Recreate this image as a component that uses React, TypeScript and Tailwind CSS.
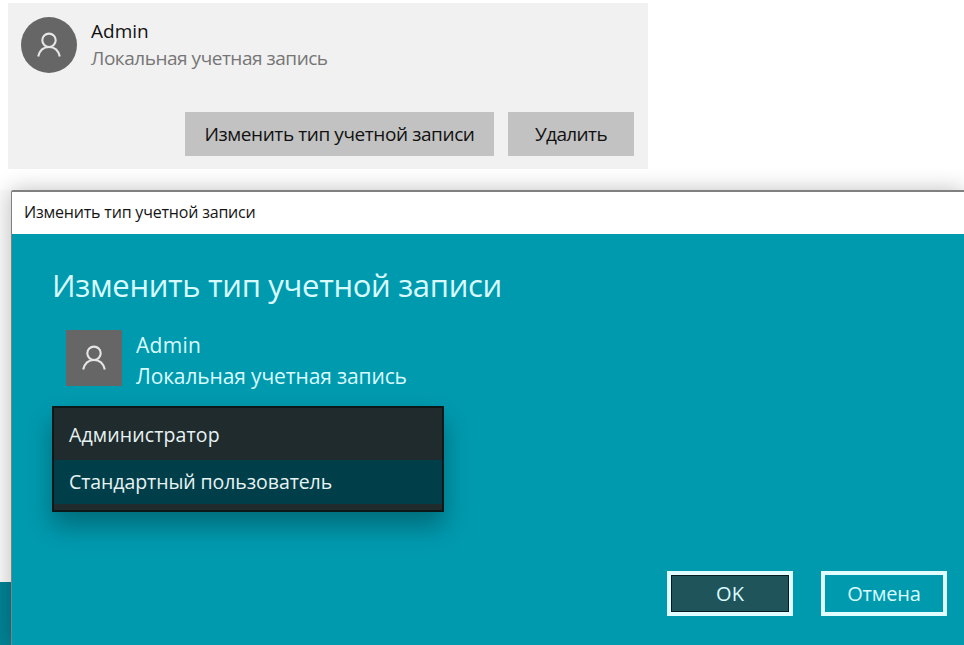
import { clsx } from 'clsx';

const roles = ['Администратор', 'Стандартный пользователь'];

function UserIcon() {
  return (
    <svg width="24" height="26" viewBox="0 0 24 26" fill="none" stroke="#e6e6e6" strokeWidth="2.1">
      <circle cx="12" cy="8.3" r="6.7" />
      <path d="M1.2 24.5C2.6 18.4 6.6 15 12 15S21.4 18.4 22.8 24.5" />
    </svg>
  );
}

function AccountCard() {
  return (
    <section className="ml-2 mt-[3px] flex h-[166px] w-[640px] shrink-0 flex-col justify-between bg-[#f1f1f1] pb-[13px] pl-[13px] pr-[14px] pt-[14px]">
      <div className="flex">
        <div className="flex h-14 w-14 items-center justify-center rounded-full bg-[#666666]">
          <UserIcon />
        </div>
        <div className="ml-[14px] pt-px">
          <div className="h-[27px] text-[19px] leading-[27px] text-[#111111]">Admin</div>
          <div className="h-[27px] whitespace-nowrap text-[19px] leading-[26px] tracking-[-0.47px] text-[#767676]">Локальная учетная запись</div>
        </div>
      </div>
      <div className="flex justify-end gap-[14px]">
        <button className="h-11 w-[309px] whitespace-nowrap bg-[#c2c2c2] pt-px text-[19px] tracking-[-0.41px] text-[#111111]">
          Изменить тип учетной записи
        </button>
        <button className="h-11 w-[126px] bg-[#c2c2c2] pt-px text-[19px] tracking-[-0.6px] text-[#111111]">Удалить</button>
      </div>
    </section>
  );
}

function RoleList() {
  return (
    <ul className="mt-[20px] h-[106px] w-[392px] border-2 border-[#0c1718] bg-[#1f2b2d] pt-[4px] shadow-[0_14px_24px_rgba(0,40,45,0.4)]">
      {roles.map((role, i) => (
        <li
          key={role}
          className={clsx(
            'flex items-center whitespace-nowrap pl-[15px] text-[#e8f2f3]',
            i === 1
              ? 'h-[44px] bg-[#003f49] pb-px text-[19.5px] tracking-[-0.08px]'
              : 'h-[48px] pb-[3px] text-[19.5px] tracking-[0.13px]',
          )}
        >
          {role}
        </li>
      ))}
    </ul>
  );
}

function ChangeTypeDialog() {
  return (
    <div className="relative flex w-[953px] shrink-0 flex-col rounded-tl-[2px] border-l border-t-2 border-[#808080] shadow-[0_0_22px_rgba(0,0,0,0.25)]">
      <div className="flex h-[42px] shrink-0 items-center bg-white pb-[2px] pl-[12px] text-[16px] tracking-[-0.19px] text-[#151515]">
        <span className="whitespace-nowrap">Изменить тип учетной записи</span>
      </div>
      <div className="flex flex-1 flex-col bg-[#009aaf] pl-[40px] pr-[17px] text-[#d9fbff]">
        <h1 className="mt-[29px] h-[44px] whitespace-nowrap text-[31px] leading-[44px] tracking-[-0.32px]">Изменить тип учетной записи</h1>
        <div className="ml-[14px] mt-[23px] flex h-14">
          <div className="flex h-14 w-14 items-center justify-center bg-[#666666]">
            <UserIcon />
          </div>
          <div className="ml-[14px] whitespace-nowrap text-[21px] leading-[31px]">
            <div className="tracking-[0.3px]">Admin</div>
            <div className="tracking-[-0.13px]">Локальная учетная запись</div>
          </div>
        </div>
        <RoleList />
        <div className="mt-auto flex justify-end gap-[28px] pb-[29px] text-[20px]">
          <button className="h-[45px] w-[126px] border-4 border-[#e0feff] bg-[#20545b] pt-px outline outline-1 -outline-offset-[5px] outline-[#071b20]">
            OK
          </button>
          <button className="h-[45px] w-[126px] border-4 border-[#e0feff] pt-px tracking-[-0.2px]">Отмена</button>
        </div>
      </div>
    </div>
  );
}

export default function App() {
  return (
    <div className="flex h-[645px] w-[964px] flex-col overflow-hidden bg-white font-['Open_Sans','Noto_Sans',sans-serif]">
      <AccountCard />
      <div className="mt-[21px] flex flex-1">
        <div className="flex w-[11px] shrink-0 flex-col">
          <div className="h-[392px] bg-[#fafafa]" />
          <div className="flex-1 bg-[#008395]" />
        </div>
        <ChangeTypeDialog />
      </div>
    </div>
  );
}
